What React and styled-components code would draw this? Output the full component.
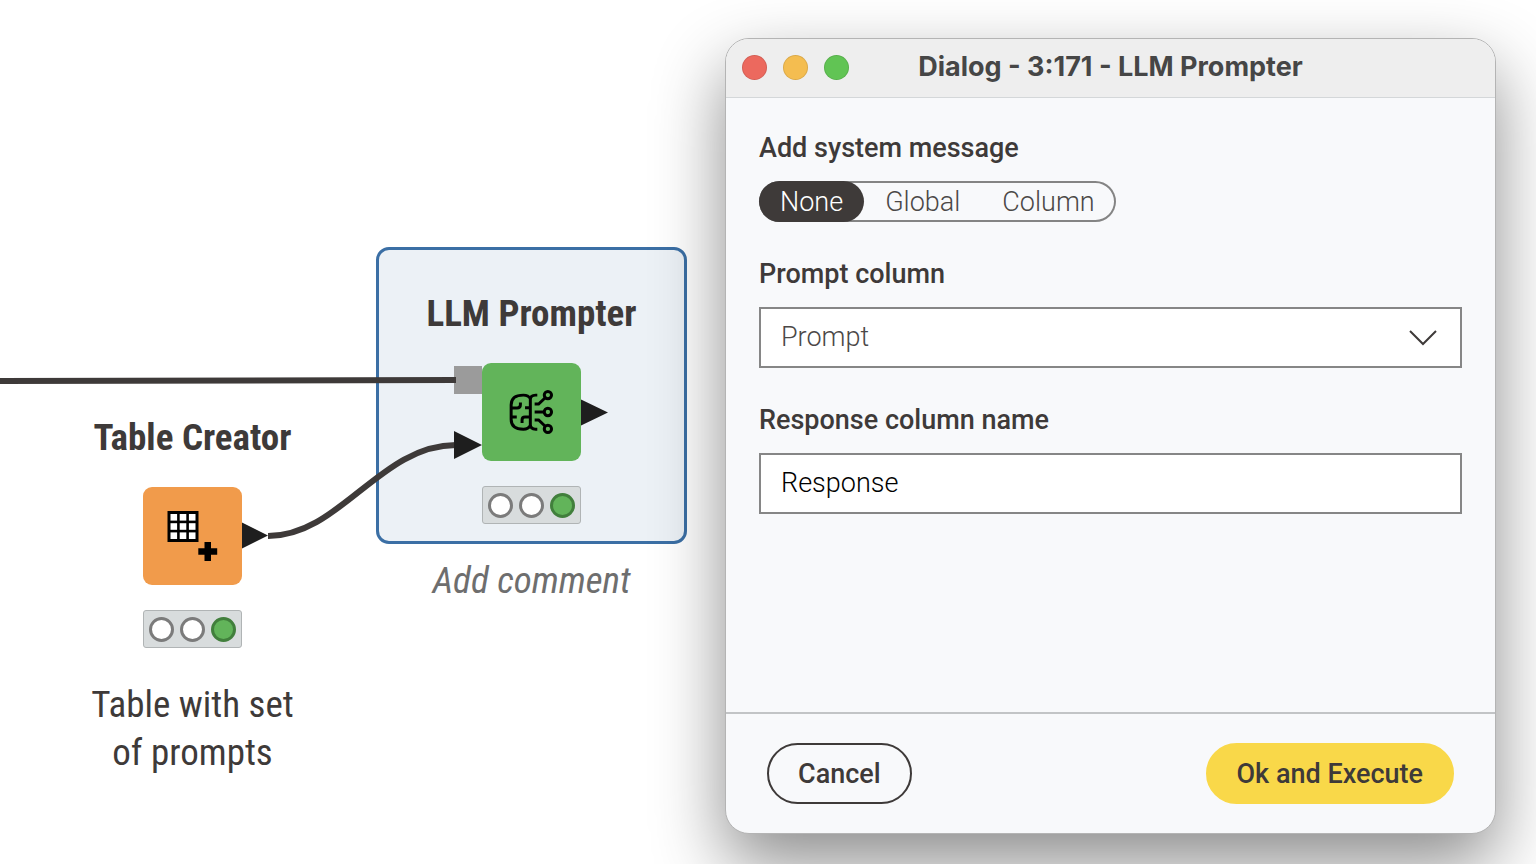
import React, { useState } from 'react'
import styled, { createGlobalStyle, css } from 'styled-components'

const GlobalStyle = createGlobalStyle`
  *, *::before, *::after {
    box-sizing: border-box;
  }
  body {
    margin: 0;
    background: #fff;
    color: #3e3a39;
    font-family: Roboto, 'Liberation Sans', sans-serif;
  }
`

const Page = styled.div`
  display: grid;
  grid-template-columns: 725fr 811fr;
  min-height: 100vh;
  overflow: hidden;
`

/* ---------- workflow canvas ---------- */

const Canvas = styled.main`
  position: relative;
  font-family: 'Roboto Condensed', Roboto, 'Liberation Sans Narrow', sans-serif;
`

const Selection = styled.div`
  position: absolute;
  left: 376px;
  top: 247px;
  width: 311px;
  height: 297px;
  border: 3px solid #3b6fa5;
  border-radius: 13px;
  background: #ecf1f6;
`

const Edges = styled.svg`
  position: absolute;
  inset: 0;
  width: 100%;
  height: 100%;
  overflow: visible;
`

const NodeBox = styled.section`
  position: absolute;
  left: ${({ $x }) => $x}px;
  top: ${({ $y }) => $y}px;
  width: 311px;
  display: flex;
  flex-direction: column;
  align-items: center;
`

const NodeTitle = styled.h2`
  margin: 0 0 25px;
  font-size: 37px;
  line-height: 48px;
  font-weight: 700;
`

const Tile = styled.div`
  width: 99px;
  height: 98px;
  border-radius: 9px;
  background: ${({ $color }) => $color};

  svg {
    display: block;
  }
`

const StatusBar = styled.div`
  display: flex;
  align-items: center;
  justify-content: space-between;
  width: 99px;
  height: 38px;
  margin: 25px 0 33px;
  padding: 0 5px;
  border: 1px solid #b0b4b5;
  border-radius: 3px;
  background: #d8dcdd;
`

const Light = styled.span`
  width: 25px;
  height: 25px;
  border: 3px solid ${({ $on }) => ($on ? '#417f3c' : '#7b7b7b')};
  border-radius: 50%;
  background: ${({ $on }) => ($on ? '#62b45a' : '#fff')};
`

const Comment = styled.p`
  max-width: 220px;
  margin: 0;
  font-size: 37px;
  line-height: 48px;
  text-align: center;
  ${({ $placeholder }) =>
    $placeholder &&
    css`
      color: #6e6e6e;
      font-style: italic;
    `}
`

/* ---------- dialog ---------- */

const Dialog = styled.section`
  position: relative;
  display: flex;
  flex-direction: column;
  margin: 38px 40px 30px 0;
  border: 1px solid #b4b4b4;
  border-radius: 24px;
  background: #f8f9fb;
  box-shadow: 0 30px 70px rgba(0, 0, 0, 0.45);
`

const TitleBar = styled.header`
  display: grid;
  grid-template-columns: 1fr auto 1fr;
  align-items: center;
  height: 59px;
  padding: 0 16px 2px;
  border-bottom: 1px solid #d4d7d9;
  border-radius: 23px 23px 0 0;
  background: #eee;
`

const WindowButtons = styled.div`
  display: flex;
  gap: 16px;
`

const WindowButton = styled.button`
  width: 25px;
  height: 25px;
  padding: 0;
  border: 1px solid rgba(0, 0, 0, 0.1);
  border-radius: 50%;
  background: ${({ $color }) => $color};
`

const Title = styled.h1`
  margin: 0;
  color: #464646;
  font: 700 27px/32px Inter, sans-serif;
`

const Form = styled.form`
  display: flex;
  flex: 1;
  flex-direction: column;
`

const Fields = styled.div`
  display: flex;
  flex: 1;
  flex-direction: column;
  gap: 36px;
  padding: 34px 33px;
`

const Field = styled.div`
  display: flex;
  flex-direction: column;
  align-items: stretch;
  gap: 17px;
`

const labelText = css`
  font-size: 27px;
  font-weight: 500;
  line-height: 32px;
`

const Label = styled.label`
  ${labelText}
`

const Group = styled.fieldset`
  min-width: 0;
  margin: 0;
  padding: 0;
  border: 0;
`

const Legend = styled.legend`
  ${labelText}
  margin-bottom: 17px;
  padding: 0;
`

const Segments = styled.div`
  display: flex;
  width: fit-content;
  height: 41px;
  border-radius: 21px;
  box-shadow: inset 0 0 0 2px #848484;
`

const Segment = styled.label`
  display: flex;
  align-items: center;
  padding: 0 21px;
  border-radius: 21px;
  color: #4b4847;
  font-size: 27px;
  font-weight: 300;

  &:has(input:checked) {
    background: #3e3a39;
    color: #fff;
  }

  input {
    position: absolute;
    opacity: 0;
    pointer-events: none;
  }
`

const control = css`
  width: 100%;
  height: 61px;
  padding: 0 20px 2px;
  border: 2px solid #868686;
  border-radius: 0;
  background: #fff;
  font-family: inherit;
  font-size: 27px;
  font-weight: 300;
`

const SelectWrap = styled.div`
  position: relative;

  svg {
    position: absolute;
    top: 22px;
    right: 24px;
    pointer-events: none;
  }
`

const Select = styled.select`
  ${control}
  appearance: none;
  color: #4b4847;
`

const TextInput = styled.input`
  ${control}
  color: #000;
`

const Footer = styled.footer`
  display: flex;
  justify-content: space-between;
  padding: 29px 41px;
  border-top: 2px solid #c2c4c6;
`

const Button = styled.button`
  height: 61px;
  padding: 0 29px;
  border: 2px solid ${({ $primary }) => ($primary ? '#f9d849' : '#3e3a39')};
  border-radius: 31px;
  background: ${({ $primary }) => ($primary ? '#f9d849' : 'transparent')};
  color: #3e3a39;
  font-family: inherit;
  font-size: 27px;
  font-weight: 500;
`

const BrainIcon = () => (
  <svg width="98" height="98" viewBox="126 39 296 296" fill="none" stroke="#000" strokeWidth="9" aria-hidden="true">
    <path d="M293 136h-5q-16 0-16 14v75q0 14 16 14h5" />
    <path d="M272 147q-6-11-21-11-37 0-37 30v43q0 30 37 30 15 0 21-11" />
    <path d="M216 175h16q10 0 10-10v-7M216 202h15M272 174h-16M272 202h-16q-9 0-9 9v9" />
    <path d="M285 163h12l20-19M285 187h29M285 211h12l20 19" />
    <circle cx="325" cy="136" r="11" />
    <circle cx="325" cy="187" r="11" />
    <circle cx="325" cy="238" r="11" />
  </svg>
)

const TableIcon = () => (
  <svg width="98" height="98" viewBox="0 0 98 98" aria-hidden="true">
    <path d="M24.5 24h31v31h-31z" />
    {[27.5, 36.7, 45.9].map(y =>
      [27.5, 36.7, 45.9].map(x => <rect key={x + '-' + y} x={x} y={y - 0.5} width="6.600" height="6.600" fill="#fff" />)
    )}
    <path d="M61.5 55h6.500v6.200h6.200v6.500h-6.200v6.200h-6.500v-6.200h-6.200v-6.500h6.200z" />
  </svg>
)

const Node = ({ x, y, title, color, comment, children }) => (
  <NodeBox $x={x} $y={y}>
    <NodeTitle>{title}</NodeTitle>
    <Tile $color={color}>{children}</Tile>
    <StatusBar>
      <Light />
      <Light />
      <Light $on />
    </StatusBar>
    <Comment $placeholder={!comment}>{comment || 'Add comment'}</Comment>
  </NodeBox>
)

const Workflow = () => (
  <Canvas>
    <Selection />
    <Edges aria-hidden="true">
      <path d="M454 366h28v28h-28z" fill="#9b9b9b" />
      <path d="M0 381L456 380" fill="none" stroke="#3e3a39" strokeWidth="6" />
      <path d="M268 536C340 536 380 445 456 445" fill="none" stroke="#3e3a39" strokeWidth="6" />
      <path d="M454 431l28 14-28 14zM580 399l28 13.500-28 13.500zM241 522l27 13.500-27 13.500z" fill="#1e1e1e" />
    </Edges>
    <Node x={37} y={414} title="Table Creator" color="#f19b4b" comment="Table with set of prompts">
      <TableIcon />
    </Node>
    <Node x={376} y={290} title="LLM Prompter" color="#62b45a">
      <BrainIcon />
    </Node>
  </Canvas>
)

const modes = ['None', 'Global', 'Column']

const App = () => {
  const [mode, setMode] = useState('None')
  const [response, setResponse] = useState('Response')

  return (
    <Page>
      <GlobalStyle />
      <Workflow />
      <Dialog role="dialog" aria-labelledby="dialog-title">
        <TitleBar>
          <WindowButtons>
            <WindowButton type="button" aria-label="Close" $color="#ec695e" />
            <WindowButton type="button" aria-label="Minimize" $color="#f4bd50" />
            <WindowButton type="button" aria-label="Zoom" $color="#61c454" />
          </WindowButtons>
          <Title id="dialog-title">Dialog - 3:171 - LLM Prompter</Title>
        </TitleBar>
        <Form onSubmit={e => e.preventDefault()}>
          <Fields>
            <Group>
              <Legend>Add system message</Legend>
              <Segments>
                {modes.map(m => (
                  <Segment key={m}>
                    <input type="radio" name="mode" checked={mode === m} onChange={() => setMode(m)} />
                    {m}
                  </Segment>
                ))}
              </Segments>
            </Group>
            <Field>
              <Label htmlFor="prompt-column">Prompt column</Label>
              <SelectWrap>
                <Select id="prompt-column">
                  <option>Prompt</option>
                </Select>
                <svg width="30" height="18" viewBox="0 0 30 18" fill="none" stroke="#3e3a39" strokeWidth="2" aria-hidden="true">
                  <path d="M2 2l13 13 13-13" />
                </svg>
              </SelectWrap>
            </Field>
            <Field>
              <Label htmlFor="response-column">Response column name</Label>
              <TextInput id="response-column" value={response} onChange={e => setResponse(e.target.value)} />
            </Field>
          </Fields>
          <Footer>
            <Button type="button">Cancel</Button>
            <Button type="submit" $primary>Ok and Execute</Button>
          </Footer>
        </Form>
      </Dialog>
    </Page>
  )
}

export default App
